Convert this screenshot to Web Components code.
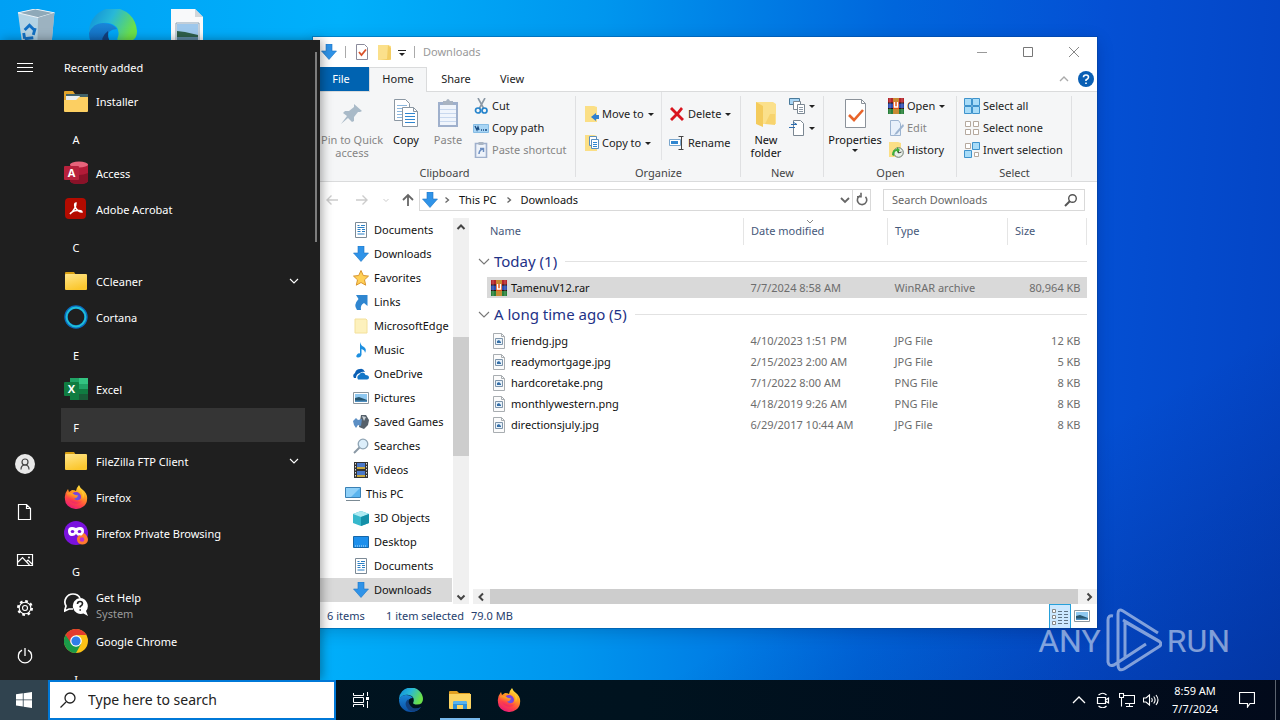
<!DOCTYPE html>
<html lang="en">
<head>
<meta charset="utf-8">
<title>Desktop</title>
<style>
  html, body { margin: 0; height: 100%; overflow: hidden; }
  body { font: 11px/16px "Noto Sans", "Open Sans", sans-serif; color: #111; }
</style>
</head>
<body>
<desk-top></desk-top>

<script>
/* ---------- icon library ---------- */
const FOLDER = `<path d="M1 4q0-1 1-1h8l2 3H1z" fill="#d9a012"/><path d="M1 6q0-1 1-1h20q1 0 1 1v14q0 1-1 1H2q-1 0-1-1z" fill="url(#f)"/><defs><linearGradient id="f" x2=".4" y2="1"><stop stop-color="#ffe58a"/><stop offset="1" stop-color="#fbc72e"/></linearGradient></defs>`;
const ARROW = `<path d="M5 0h6v7h4.5L8 15.500.5 7H5z" fill="#2f93e8" stroke="#1b74c5" stroke-width=".6"/>`;
const RAR = `<path d="M0 0h16v5H0z" fill="#b5252b"/><path d="M0 5h16v5H0z" fill="#2d4cb0"/><path d="M0 10h16v6H0z" fill="#28803a"/><path d="M0 5h16M0 10.500h16" stroke="#24130f"/><path d="M5 0h6v16H5z" fill="#c98b34"/><path d="M5 4h6v7H5z" fill="#e4571c"/><path d="M6.500 4v5h3V4" fill="none" stroke="#fff" stroke-width="1.500"/><path d="M2 0v16M14 0v16" stroke="#ffffff" stroke-opacity=".25"/>`;
const DOCTEXT = `<path d="M2.500.5h11v15h-11z" fill="#fff" stroke="#7c8a96"/><path d="M4.500 3.500h2M8 3.500h4M4.500 5.500h7M4.500 7.500h3M9 7.500h3M4.500 9.500h3M9 9.500h3M4.500 12h7" stroke="#2a7fc4"/>`;
const JPG = `<path d="M2.500.5h8l3 3v12h-11z" fill="#fbfbfb" stroke="#a8adb1"/><path d="M10.500.5v3h3" fill="none" stroke="#a8adb1"/><path d="M4.500 5.500h7v6h-7z" fill="#e8f2fa" stroke="#7d94aa"/><path d="M6 10V8l2-1 2 2v1z" fill="#356fa8"/>`;
const PIC = `<path d="M.5 2.500h15v11H.5z" fill="#fff" stroke="#8d979f"/><path d="M2 4h12v8H2z" fill="#8fc8f0"/><path d="M2 8l4-1 8 3v2H2z" fill="#27556e"/><path d="M2 10.500h12V12H2z" fill="#4f8fc0"/>`;
const FOX = `<defs><linearGradient id="g" x1=".8" y1="0" x2=".3" y2="1"><stop stop-color="#fff34a"/><stop offset=".35" stop-color="#ffa51f"/><stop offset=".7" stop-color="#ff4743"/><stop offset="1" stop-color="#e8177c"/></linearGradient><radialGradient id="h"><stop stop-color="#4e6bf0"/><stop offset="1" stop-color="#8a35d6"/></radialGradient></defs><path d="M15 0q1 3 4 5 5 4 4 10a11 9.500 0 0 1-22-1Q0 9 4 4l1 3 3-2q3 0 4 1 1-4 3-6z" fill="url(#g)"/><circle cx="12" cy="12" r="5" fill="url(#h)"/><path d="M3 8q5-1 8 2l3 .5q-1 3-4 3 2 3 6 1 4-3 2-8 4 5 0 10-4 4-10 1-5-3-5-9.500z" fill="url(#g)"/>`;
const EDGE = `<defs><linearGradient id="e1" x2="1" y2=".4"><stop stop-color="#0c8ad8"/><stop offset=".5" stop-color="#28b8d8"/><stop offset="1" stop-color="#6ae04a"/></linearGradient><linearGradient id="e2" x2="0" y2="1"><stop stop-color="#1a86d8"/><stop offset="1" stop-color="#0b4fa3"/></linearGradient></defs><path d="M0 12A12 12 0 0 1 24 11q0 5.500-6 5.500-5 0-3.500-2.500Q16 8.500 10 7 3 6 0 12z" fill="url(#e1)"/><path d="M0 12q2-5 7-5 5 0 7 3-5 0-5 5 0 6 6 7 4 0 7-3-3 5-10 5A12 12 0 0 1 0 12z" fill="url(#e2)"/><path d="M9.500 11q-4 3-2.500 7 2 5 7 5.500 5-.5 8-4.500-4 2-8 1-5-3-4.500-9z" fill="#12407e"/>`;
const chev = (d, c, w = 1.2) => `<path d="${d}" fill="none" stroke="${c}" stroke-width="${w}"/>`;
const line = (d, c = '#fff', w = 1) => `<path d="${d}" fill="none" stroke="${c}" stroke-width="${w}"/>`;

const ICONS = {
  /* start menu */
  menu: [24, line('M4 7.500h16M4 11.500h16M4 15.500h16')],
  user: [24, `<circle cx="12" cy="12" r="10" fill="#e8e8e8"/><circle cx="12" cy="10" r="3" fill="none" stroke="#444" stroke-width="1.200"/><path d="M8 17.500q0-4.500 4-4.500t4 4.500" fill="none" stroke="#444" stroke-width="1.200"/>`],
  doc: [24, line('M5.500 4.500h8l4 4v11h-12zM13.500 4.500v4h4', '#fff', 1.2)],
  picture: [24, line('M4.500 6.500h15v11h-15zM5 14l4.500-4.500 7 7.500M13 14l2-2 4 4', '#fff', 1.2) + '<circle cx="16" cy="9.500" r="1" fill="#fff"/>'],
  gear: [24, `<circle cx="12" cy="12" r="6.800" fill="none" stroke="#fff" stroke-width="2.400" stroke-dasharray="2.670 2.670"/><circle cx="12" cy="12" r="5.800" fill="#1f1f1f" stroke="#fff" stroke-width="1.100"/><circle cx="12" cy="12" r="2.500" fill="none" stroke="#fff" stroke-width="1.100"/>`],
  power: [24, line('M9 6.200a6.700 6.700 0 1 0 6 0M12 4v8', '#fff', 1.3)],
  down: [12, chev('M2 4l4 4 4-4', '#fff', 1.1)],
  folder: [24, FOLDER],
  installer: [24, `<path d="M0 3q0-1 1-1h8l2 3h13v6H0z" fill="#e0a32b"/><path d="M2 5h22v5H2z" fill="#41626a"/><path d="M2 7h14l-2 4H2z" fill="#e8eef0"/><path d="M0 11h12l3-3h9v14q0 1-1 1H1q-1 0-1-1z" fill="#fccf62"/>`],
  access: [24, `<path d="M6 3v17q1 3 9 3t9-3V3z" fill="#b31b38"/><path d="M6 12q9 4 18 0v8q-1 3-9 3t-9-3z" fill="#8a1228"/><ellipse cx="15" cy="3.500" rx="9" ry="3" fill="#e8637b"/><rect y="5" width="15" height="14" rx="1" fill="#b8213c"/><text x="7.500" y="16" font-family="Open Sans" font-weight="700" font-size="11" fill="#fff" text-anchor="middle">A</text>`],
  acrobat: [24, `<rect x="1" y="1" width="21" height="21" rx="4" fill="#b30b00"/><path d="M6 17q6-5 6-11-2 0-1 4 3 5 7 5 0-2-5-1.500T6 17z" fill="none" stroke="#fff" stroke-width="1.500"/>`],
  cortana: [24, `<circle cx="12" cy="12" r="10" fill="none" stroke="#0a6cc0" stroke-width="3.400"/><circle cx="12" cy="12" r="9.500" fill="none" stroke="#1fc0d8" stroke-width="1.800"/>`],
  excel: [24, `<path d="M6 1h18v22H6z" fill="#21a366"/><path d="M15 1h9v6h-9z" fill="#33c481"/><path d="M6 12h9v11H6z" fill="#107c41"/><path d="M15 12h9v11h-9z" fill="#185c37"/><path d="M15 12h9v5h-9z" fill="#107c41"/><rect y="5" width="15" height="14" rx="1" fill="#107c41"/><text x="7.500" y="16" font-family="Open Sans" font-weight="700" font-size="11" fill="#fff" text-anchor="middle">X</text>`],
  firefox: [24, FOX],
  private: [24, `<circle cx="12" cy="12" r="12" fill="#7a12dd"/><path d="M4 10q0-4 4-4 2 0 4 1 2-1 4-1 4 0 4 4 0 5-4 5-3 0-4-2-1 2-4 2-4 0-4-5z" fill="#fff"/><ellipse cx="8.500" cy="10.500" rx="1.800" ry="1.500" fill="#7a12dd"/><ellipse cx="15.500" cy="10.500" rx="1.800" ry="1.500" fill="#7a12dd"/><path d="M13 18q0-3 3-4l1 1 3-3q4 3 4 7a5.500 5 0 0 1-11-1z" fill="#ff7a2f"/><circle cx="18" cy="18.500" r="2.300" fill="#c02fd0"/>`],
  help2: [24, `<path d="M9 1a8 8 0 0 0-7 12l-1.500 5 4.500-2h4" fill="none" stroke="#fff" stroke-width="1.700"/><path d="M9 1q5 0 7 4" fill="none" stroke="#fff" stroke-width="1.700"/><path d="M16 5a8 8 0 1 0 3.500 15.500L24 23l-2-5a8 8 0 0 0-6-13z" fill="#fff"/><path d="M13.500 11q0-2.500 2.500-2.500t2.500 2.200q0 1.500-2.300 2.800v1M16.200 16.200v1.600" stroke="#1f1f1f" stroke-width="1.600" fill="none"/>`],
  chrome: [24, `<circle cx="12" cy="12" r="12" fill="#fbc116"/><path d="M12 12L1.600 6A12 12 0 0 0 12 24l5-9z" fill="#1a9a48"/><path d="M1.600 6A12 12 0 0 1 22.400 6H12v6L7 14z" fill="#e33b2e"/><circle cx="12" cy="12" r="5.800" fill="#fff"/><circle cx="12" cy="12" r="4.600" fill="#2f7de9"/>`],
  /* taskbar */
  windows: [16, `<path d="M0 2.300l6.800-1v6.200H0zM7.600 1.200L16 0v7.500H7.600zM0 8.300h6.800v6.300L0 13.600zM7.600 8.300H16V16l-8.400-1.200z" fill="#fff"/>`],
  search: [16, line('M.5 15.500l5.500-5.500', '#222', 1.3) + '<circle cx="10" cy="6" r="5" fill="none" stroke="#222" stroke-width="1.300"/>'],
  taskview: [16, line('M.5 1v2.500h10V1M.5 15v-2.500h10V15M.5 5.500h10v5H.5zM14.500 0v4M14.500 9v7') + '<path d="M13 5h3v3h-3z" fill="#fff"/>'],
  edge: [24, EDGE],
  explorer: [24, `<path d="M1 4q0-1 1-1h7l2 2h11v5H1z" fill="#e2a021"/><path d="M1 6h22v14q0 1-1 1H2q-1 0-1-1z" fill="#fcd462"/><path d="M5 21v-6q0-2 2-2h10q2 0 2 2v6h-4v-4H9v4z" fill="#2f8fd8"/><path d="M5 15q0-2 2-2h10q2 0 2 2v1H5z" fill="#59b2ee"/>`],
  up: [16, chev('M2 11l6-6 6 6', '#fff', 1.3)],
  meet: [16, line('M2.500 5.500h8v6h-8zM10.500 8l3-2v5l-3-2M3.500 3q4.500-3.500 8 0M3.500 14q4.500 3.500 8 0', '#fff', 1.2)],
  net: [16, line('M4 3.500h11.500v8H6M10.500 11.500v3M7 14.500h7M.5 1.500h4v4h-4zM2.500 5.500v9', '#fff', 1.1)],
  sound: [16, line('M.5 6h2.500l3.500-3v10L3 10H.500zM8.500 6q1.500 2 0 4M10.700 4.500q2.800 3.500 0 7M13 3q4 5 0 10', '#fff', 1.1)],
  note: [16, line('M.500.500h15v11h-4.500L8.500 15V11.500h-8z', '#fff', 1.2)],
  /* desktop */
  bin: [48, `<path d="M1 4l18-4 20 4-4 44H7z" fill="#c8d8e2" fill-opacity=".9"/><path d="M1 4l18-4 20 4-17 5z" fill="#8fa9b8" stroke="#eef5f9"/><path d="M22 9l17-5-4 44H21z" fill="#9cb2c0"/><path d="M8 22l5-5 5 5M19 20l-2 7M17 30l-9 1M8 31l-1-6" stroke="#1270c4" stroke-width="3" fill="none"/>`],
  photo: [48, `<path d="M8 0h24l8 8v40H8z" fill="#f8f9fa"/><path d="M32 0v8h8z" fill="#d0d6da"/><path d="M13 14h23v20H13z" fill="#fff" stroke="#8aa0b4"/><path d="M14 15h21v15H14z" fill="#9ec8ec"/><path d="M14 22l8 1 13 3v5H14z" fill="#2f5f4a"/><path d="M14 28h21v5H14z" fill="#5c86a0"/>`],
  /* explorer */
  arrow: [16, ARROW],
  checkdoc: [16, `<path d="M2.500.500h8l3 3v12h-11z" fill="#fff" stroke="#8b8b9b"/><path d="M5 8l2.500 3L12 5.500" stroke="#d8512a" stroke-width="1.800" fill="none"/>`],
  pale: [16, `<path d="M1 1h10l3 1v14H1z" fill="#fbe08b"/><path d="M11 1l3 3v11l-2 1H3l7-1z" fill="#f3cd62"/>`],
  faint: [16, `<path d="M2 1h11l1 1v13H2z" fill="#fdf1bd" stroke="#f3e09a"/>`],
  qat: [8, `<path d="M0 1.500h8" stroke="#222"/><path d="M1 4h6L4 7z" fill="#222"/>`],
  min: [12, line('M1 6.500h10', '#999')],
  max: [12, line('M1.500 1.500h9v9h-9z', '#777')],
  close: [12, line('M1 1l10 10M11 1L1 11', '#888')],
  collapse: [12, chev('M2 8l4-4 4 4', '#aaa', 1.4)],
  help: [16, `<circle cx="8" cy="8" r="8" fill="#0a5fb4"/><path d="M5.500 6.200Q5.500 4 8 4t2.500 2.200Q10.500 7.500 8 9v1M8 11.500v1.500" stroke="#fff" stroke-width="1.600" fill="none"/>`],
  pin: [24, `<path d="M14 2l8 7-2 1-2 0-4 5 0 4-2 1-4-4-7 6 6-8-4-3 2-2 4 0 5-4z" fill="#a9bac8"/>`],
  copy: [32, `<path d="M4.500 1.500h11l4 4v17h-15z" fill="#fff" stroke="#8b97a2"/><path d="M7 7.500h10M7 10.500h10M7 13.500h10M7 16.500h10M7 19.500h8" stroke="#8ab6de"/><path d="M12.500 9.500h11l4 4v15h-15z" fill="#fff" stroke="#8b97a2"/><path d="M23.500 9.500v4h4" fill="none" stroke="#8b97a2"/><path d="M15 15.500h10M15 18.500h10M15 21.500h10M15 24.500h10" stroke="#2f86d0"/>`],
  paste: [32, `<path d="M6 4h20v25H6z" fill="#9fb0cc"/><path d="M8 7h16v20H8z" fill="#f0f5fc"/><path d="M8 11.500h16M8 15.500h16M8 19.500h16M8 23.500h16" stroke="#c8d8ee"/><path d="M11 3h3q2-4 4 0h3v4H11z" fill="#a9b4c2"/>`],
  cut: [16, `<path d="M5 0l6 11M12 0L6 11" stroke="#8b98a5" stroke-width="1.600"/><circle cx="5" cy="12.500" r="2.500" fill="none" stroke="#2684cc" stroke-width="1.700"/><circle cx="11.500" cy="12.500" r="2.500" fill="none" stroke="#2684cc" stroke-width="1.700"/>`],
  path: [16, `<path d="M.5 4.500h15v8H.5z" fill="#a8d5f5" stroke="#86bce4"/><path d="M2 6l2 4 1-3 1 3M8 10h1M10 10h1M12 10h2" stroke="#174a80" fill="none" stroke-width="1.300"/>`],
  shortcut: [16, `<path d="M2.500 1.500h11v14h-11z" fill="#eef3fa" stroke="#9fb0cc" stroke-width="1.600"/><path d="M5.500 0h5v3h-5z" fill="#a9b4c2"/><path d="M6 12q0-4 4-5M7 6.500h3.500V10" stroke="#6d8ec0" stroke-width="1.500" fill="none"/>`],
  moveto: [16, `<path d="M2 0h9l3 1v15H2z" fill="#fbdf86"/><path d="M16 9h-3V7l-5 4 5 4v-2h3z" fill="#2f7fd0"/>`],
  copyto: [16, `<path d="M2 0h9l3 1v15H2z" fill="#fbdf86"/><path d="M6.500 1.500h7v9h-7z" fill="#fff" stroke="#5a8fc0"/><path d="M8.500 4.500h7v9h-7z" fill="#fff" stroke="#5a8fc0"/><path d="M10 7.500h4M10 9.500h4M10 11.500h4" stroke="#2f86d0"/>`],
  del: [16, `<path d="M3 1l5 5 4-5 2 2-4 5 5 5-2 2-5-5-5 5-2-2 5-5-5-5z" fill="#d9141e"/>`],
  rename: [16, `<path d="M.5 4.500h11v6H.5z" fill="#fff" stroke="#7aa6cc"/><path d="M2 6h7v3H2z" fill="#2f86d0"/><path d="M9.500 1.500h5M9.500 14.500h5M12.500 2v12" stroke="#444" fill="none"/>`],
  newfolder: [32, `<path d="M6 4h17l3 2v20H8z" fill="#fbe08b"/><path d="M6 4l7 4v21l-7-3z" fill="#f4cb5c"/><path d="M20 16h5v11l-10-1z" fill="#f7d36e"/>`],
  newitem: [16, `<path d="M.5.5h10v6H.5z" fill="#a8d5f5" stroke="#4a7a9a"/><path d="M4.500 3.500h7v8h-7z" fill="#fff" stroke="#7b8792"/><path d="M8.500 6.500h7v9h-7z" fill="#fff" stroke="#7b8792"/><path d="M10 9.500h4M10 11.500h4M10 13.500h4" stroke="#8b98a5"/>`],
  easy: [16, `<path d="M4.500.500h7l3 3v12h-10z" fill="#fff" stroke="#7b8792"/><path d="M2 4.500h6M0 7.500h6M4 2l4 2.500" stroke="#2f6fb0" fill="none"/>`],
  props: [32, `<path d="M6.500 1.500h16l4 4v24h-20z" fill="#fff" stroke="#8b929a"/><path d="M22.500 1.500v4h4" fill="none" stroke="#8b929a"/><path d="M10 17l5 5 9-10" stroke="#e8642a" stroke-width="2.600" fill="none"/>`],
  rar: [16, RAR],
  edit: [16, `<path d="M2.500.500h8l2 3v12h-10z" fill="#e8f0fa" stroke="#9db4d0"/><path d="M15 4l-7 8-2 3 3-1 7-8z" fill="#9db4d0"/>`],
  history: [16, `<path d="M1 0h9l3 1v14H1z" fill="#fbdf86"/><circle cx="10.500" cy="10.500" r="4.800" fill="#e8efe8" stroke="#6a7a70"/><path d="M10.500 8v3l3-1" stroke="#444" fill="none"/><path d="M4 13q0-6 5-6V5l3 3-3 3V9q-3 0-3 5z" fill="#3fae3a"/>`],
  selall: [16, `<path d="M.5.5h7v7h-7zM8.500.5h7v7h-7zM.5 8.500h7v7h-7zM8.500 8.500h7v7h-7z" fill="#a8dcf8" stroke="#3f93cc"/>`],
  selnone: [16, `<path d="M1.500 1.500h5v5h-5zM9.500 1.500h5v5h-5zM1.500 9.500h5v5h-5zM9.500 9.500h5v5h-5z" fill="#fff" stroke="#b5a99e"/>`],
  selinv: [16, `<path d="M8.500.5h7v7h-7zM.5 8.500h7v7h-7z" fill="#a8dcf8" stroke="#3f93cc"/><path d="M1.500 1.500h5v5h-5zM10.500 10.500h4v4h-4z" fill="#fff" stroke="#b5a99e"/>`],
  back: [16, line('M14 8H3M7.500 3.500L3 8l4.500 4.500', '#ccc', 1.4)],
  forward: [16, line('M2 8h11M8.500 3.500L13 8l-4.500 4.500', '#ccc', 1.4)],
  recent: [8, chev('M1.500 3L4 5.500 6.500 3', '#ccc', 1)],
  upto: [16, line('M8 14V3M3 8l5-5 5 5', '#666', 1.8)],
  crumb: [8, chev('M2.500 1.500L5.500 4 2.500 6.500', '#666', 1.3)],
  drop: [12, chev('M2 4l4 4 4-4', '#666', 1.8)],
  refresh: [16, line('M11.500 4.700A4.700 4.700 0 1 1 6 3.700M7 .800V4.800H3', '#666', 1.6)],
  find: [16, line('M2 14l5-5', '#555', 2) + '<circle cx="9.500" cy="6.500" r="3.800" fill="none" stroke="#555" stroke-width="1.400"/>'],
  documents: [16, DOCTEXT],
  star: [16, `<path d="M8 .5l2.300 5 5.200.6-4 3.700 1.200 5.400L8 12.500l-4.700 2.700L4.500 9.800.5 6.100l5.200-.6z" fill="#ffd056" stroke="#d89530"/>`],
  links: [16, `<path d="M3 1h11.500v11L11 9q-4 2-3 7H4q-4-5 1.500-11z" fill="#2f86d0"/>`],
  music: [16, `<path d="M7 0q1 4 4 5 3 2 1 6 0-3-3.500-4v6q-1 3-4 2.500-2.500-1 0-3.500 1-1 2.500-.5z" fill="#1c8fe0"/>`],
  onedrive: [16, `<path d="M1 12q-2-3 1-5 1-4 5-4 3-1 5 3-3-1-5 1-4 1-4 5z" fill="#0a5fb4"/><path d="M5 13.500q-2-3 1.500-5Q8 5.500 11 7q1 .500 1.500 2 3.500 0 3.500 2.500 0 2-2 2z" fill="#1477c8"/>`],
  pictures: [16, PIC],
  games: [16, `<path d="M8 1h5l3 5-1 5-4 4-5-2z" fill="#56616b"/><path d="M9 2l4 1-2 4z" fill="#c8d0d6"/><path d="M0 7l3-3 2 2 4-1-1 7-3-1-2 3-2-3z" fill="#5c8fc4"/>`],
  searches: [16, line('M1 15l5.500-5.500', '#8a98a4', 2) + '<circle cx="10" cy="6" r="4.800" fill="#dceefa" stroke="#8fa4b4" stroke-width="1.300"/>'],
  videos: [16, `<path d="M1 0h14v16H1z" fill="#333"/><path d="M4 1h8v6H4z" fill="#4a78c8"/><path d="M4 5h8v2H4zM4 13h8v2H4z" fill="#c8a83a"/><path d="M4 9h8v4H4z" fill="#4a78c8"/><path d="M2.500 1v15M13.500 1v15" stroke="#ddd" stroke-dasharray="1.500 1.500"/>`],
  pc: [16, `<path d="M.5 1.500h15v10H.5z" fill="#5ab4ee" stroke="#3a80b4"/><path d="M1 2h14L6 11H1z" fill="#8fd0f8"/><path d="M1 14.500h14" stroke="#7b8a94"/>`],
  cube: [16, `<path d="M0 4l8-3 8 3v9l-8 3-8-3z" fill="#36b8cc"/><path d="M0 4l8-3 8 3-8 3z" fill="#aeeaf2"/><path d="M8 7l8-3v9l-8 3z" fill="#1490a8"/>`],
  desktop: [16, `<path d="M.5 2.500h15v11H.5z" fill="#1c8fec" stroke="#1566a8"/><path d="M2 12h12" stroke="#b8e0fa" stroke-dasharray="1 1"/>`],
  jpg: [16, JPG],
  group: [12, chev('M1 4l5 5 5-5', '#777', 1.1)],
  sort: [8, chev('M1 2l3 3 3-3', '#888', 1)],
  sup: [12, chev('M2.500 8L6 4.500 9.500 8', '#444', 2)],
  sdown: [12, chev('M2.500 4.500L6 8l3.500-3.500', '#444', 2)],
  sleft: [12, chev('M8 2.500L4.500 6 8 9.500', '#444', 2)],
  sright: [12, chev('M4.500 2.500L8 6 4.500 9.500', '#444', 2)],
  details: [16, `<path d="M.5.5h3v3h-3zM.5 6.500h3v3h-3zM.5 12.500h3v3h-3z" fill="#fff" stroke="#888"/><path d="M6 2.500h4M12 2.500h4M6 5.500h4M12 5.500h4M6 8.500h4M12 8.500h4M6 11.500h4M12 11.500h4M6 14.500h4M12 14.500h4" stroke="#5f7384"/>`],
  caret: [8, `<path d="M1 3h6L4 6z" fill="#222"/>`]
};

/* Registers an element whose shadow root is cloned from a template;
   `html` may be a function of the element, for those with attributes. */
function define(tag, css, html) {
  customElements.define(tag, class extends HTMLElement {
    connectedCallback() {
      if (this.shadowRoot) return;
      const t = document.createElement('template');
      t.innerHTML = `<style>*{box-sizing:border-box}button{font:inherit;color:inherit;background:none;border:0;padding:0;margin:0}${css}</style>` +
        (typeof html === 'function' ? html(this) : html);
      this.attachShadow({ mode: 'open' }).append(t.content.cloneNode(true));
    }
  });
}

define('ui-icon', `:host{display:block;flex:none;line-height:0}svg{display:block}`, el => {
  const [box, body] = ICONS[el.getAttribute('name')];
  const s = el.getAttribute('size') || box;
  return `<svg width="${s}" height="${s}" viewBox="0 0 ${box} ${box}" aria-hidden="true">${body}</svg>`;
});

/* ---------- start menu ---------- */
define('start-item', `
  :host{display:block;height:36px}
  button{display:flex;align-items:center;gap:8px;width:100%;height:100%;padding:0 5px 0 3px;text-align:left;color:#fff}
  .t{flex:1;line-height:16px;padding-top:2px} small{display:block;font-size:11px;color:#9a9a9a}`,
  el => `<button><ui-icon name="${el.getAttribute('icon')}" size="24"></ui-icon><span class="t"><slot></slot>${el.hasAttribute('sub') ? `<small>${el.getAttribute('sub')}</small>` : ''}</span>${el.hasAttribute('more') ? '<ui-icon name="down"></ui-icon>' : ''}</button>`);

define('start-letter', `
  :host{display:block;height:36px;padding:1px 0}
  button{display:block;width:100%;height:34px;padding:5px 0 0 3px;text-align:left;color:#fff}
  :host([hot]) button{background:#353535}
  span{display:block;width:24px;text-align:center}`, `<button><span><slot></slot></span></button>`);

define('start-menu', `
  :host{display:flex;background:#1f1f1f;color:#fff;overflow:hidden}
  nav{display:flex;flex-direction:column;width:50px;flex:none;padding-top:4px}
  nav button{display:flex;align-items:center;justify-content:center;height:48px}
  nav button:first-child{margin-bottom:auto}
  .list{flex:1;min-width:0;overflow:hidden;padding:7px 10px 0 11px}
  h2{font:inherit;margin:0;height:36px;padding:13px 0 0 3px}
  .bar{width:5px;flex:none;padding-top:12px}
  .bar i{display:block;width:2px;height:190px;background:#7d7d7d}`, `
  <nav aria-label="Start">
    <button aria-label="Expand"><ui-icon name="menu"></ui-icon></button>
    <button aria-label="User"><ui-icon name="user"></ui-icon></button>
    <button aria-label="Documents"><ui-icon name="doc"></ui-icon></button>
    <button aria-label="Pictures"><ui-icon name="picture"></ui-icon></button>
    <button aria-label="Settings"><ui-icon name="gear"></ui-icon></button>
    <button aria-label="Power"><ui-icon name="power"></ui-icon></button>
  </nav>
  <div class="list">
    <h2>Recently added</h2>
    <start-item icon="installer">Installer</start-item>
    <start-letter>A</start-letter>
    <start-item icon="access">Access</start-item>
    <start-item icon="acrobat">Adobe Acrobat</start-item>
    <start-letter>C</start-letter>
    <start-item icon="folder" more>CCleaner</start-item>
    <start-item icon="cortana">Cortana</start-item>
    <start-letter>E</start-letter>
    <start-item icon="excel">Excel</start-item>
    <start-letter hot>F</start-letter>
    <start-item icon="folder" more>FileZilla FTP Client</start-item>
    <start-item icon="firefox">Firefox</start-item>
    <start-item icon="private">Firefox Private Browsing</start-item>
    <start-letter>G</start-letter>
    <start-item icon="help2" sub="System">Get Help</start-item>
    <start-item icon="chrome">Google Chrome</start-item>
    <start-letter>I</start-letter>
  </div>
  <div class="bar"><i></i></div>`);

/* ---------- taskbar ---------- */
define('task-button', `
  :host{display:block;width:48px}
  :host([tray]){width:24px}
  button{display:flex;width:100%;height:100%;align-items:center;justify-content:center}
  :host([active]) button{background:linear-gradient(#76b9ed,#76b9ed) center bottom/40px 2px no-repeat}
  :host([pressed]) button{background:#30434f}`,
  el => `<button aria-label="${el.getAttribute('label')}"><ui-icon name="${el.getAttribute('icon')}" size="${el.getAttribute('size')}"></ui-icon></button>`);

define('task-bar', `
  :host{display:flex;background:linear-gradient(90deg,#001420,#00131f 50%,#020a1b);color:#fff}
  label{display:flex;align-items:center;gap:12px;width:288px;padding:0 10px;background:#fff;border:2px solid #0078d7}
  input{font:14px/20px "Noto Sans",sans-serif;border:0;outline:0;padding:0;flex:1;min-width:0;background:none}
  input::placeholder{color:#222;opacity:1}
  .apps{display:flex;gap:1px}
  .apps task-button:first-child{width:50px}
  .tray{display:flex;margin-left:auto}
  time{width:64px;text-align:center;line-height:18px;padding-top:2px}
  .note{width:40px;margin-right:8px}
  .peek{width:5px;border-left:1px solid #5c6470}`, `
  <task-button icon="windows" size="16" label="Start" pressed></task-button>
  <label><ui-icon name="search" size="16"></ui-icon><input type="text" placeholder="Type here to search" aria-label="Type here to search"></label>
  <div class="apps">
    <task-button icon="taskview" size="16" label="Task View"></task-button>
    <task-button icon="edge" size="24" label="Edge"></task-button>
    <task-button icon="explorer" size="24" label="File Explorer" active></task-button>
    <task-button icon="firefox" size="24" label="Firefox"></task-button>
  </div>
  <div class="tray">
    <task-button tray icon="up" size="16" label="Hidden icons"></task-button>
    <task-button tray icon="meet" size="16" label="Meet Now"></task-button>
    <task-button tray icon="net" size="16" label="Network"></task-button>
    <task-button tray icon="sound" size="16" label="Volume"></task-button>
    <time>8:59 AM<br>7/7/2024</time>
    <task-button class="note" icon="note" size="16" label="Notifications"></task-button>
    <button class="peek" aria-label="Show desktop"></button>
  </div>`);

/* ---------- explorer ribbon ---------- */
define('ribbon-group', `
  :host{display:flex;flex-direction:column;flex:none;position:relative}
  :host::after{content:"";position:absolute;right:0;top:4px;bottom:4px;width:1px;background:#dfe0e2}
  .body{display:flex;flex:1;padding-left:var(--inset,0)} .label{text-align:center;color:#444;height:16px}`,
  el => `<div class="body"><slot></slot></div><div class="label">${el.getAttribute('label')}</div>`);

define('ribbon-big', `
  :host{display:block;flex:none}
  button{display:flex;flex-direction:column;align-items:center;width:100%;padding-top:6px;line-height:13px;white-space:nowrap}
  ui-icon{margin-bottom:3px} .pin{padding:4px}
  :host([off]) button{color:#858585}`,
  el => `<button><ui-icon ${el.getAttribute('icon') === 'pin' ? 'class="pin"' : ''} name="${el.getAttribute('icon')}"></ui-icon><span><slot></slot></span>${el.hasAttribute('menu') ? '<ui-icon name="caret"></ui-icon>' : ''}</button>`);

define('ribbon-small', `
  :host{display:block;height:22px}
  button{display:flex;align-items:center;gap:3px;height:100%;white-space:nowrap;color:#222}
  :host([off]) button{color:#858585}`,
  el => `<button aria-label="${el.textContent || el.getAttribute('label')}"><ui-icon name="${el.getAttribute('icon')}" size="16"></ui-icon><slot></slot>${el.hasAttribute('menu') ? '<ui-icon name="caret"></ui-icon>' : ''}</button>`);

define('explorer-ribbon', `
  :host{display:flex;height:91px;background:#f5f6f7;border-top:1px solid #dadbdc;border-bottom:1px solid #dadbdc;overflow:hidden}
  .col{padding-top:3px} .wide{padding-top:7px} .wide ribbon-small{height:29px}
  .clip{width:263px;--inset:4px} .org{width:165px;--inset:7px} .new{width:83px;--inset:2px} .open{width:133px;--inset:1px} .sel{width:115px;--inset:7px}
  .b70{width:70px} .b38{width:38px} .b46{width:46px} .b60{width:60px;margin-right:3px} .clip .col{padding-left:2px}
  .first{width:79px;margin-right:7px;height:68px;border-right:1px solid #e2e3e5}`, `
  <ribbon-group class="clip" label="Clipboard">
    <ribbon-big class="b70" icon="pin" off>Pin to Quick<br>access</ribbon-big>
    <ribbon-big class="b38" icon="copy">Copy</ribbon-big>
    <ribbon-big class="b46" icon="paste" off>Paste</ribbon-big>
    <div class="col"><ribbon-small icon="cut">Cut</ribbon-small><ribbon-small icon="path">Copy path</ribbon-small><ribbon-small icon="shortcut" off>Paste shortcut</ribbon-small></div>
  </ribbon-group>
  <ribbon-group class="org" label="Organize">
    <div class="wide first"><ribbon-small icon="moveto" menu>Move to</ribbon-small><ribbon-small icon="copyto" menu>Copy to</ribbon-small></div>
    <div class="wide"><ribbon-small icon="del" menu>Delete</ribbon-small><ribbon-small icon="rename">Rename</ribbon-small></div>
  </ribbon-group>
  <ribbon-group class="new" label="New">
    <ribbon-big class="b46" icon="newfolder">New<br>folder</ribbon-big>
    <div class="col"><ribbon-small icon="newitem" label="New item" menu></ribbon-small><ribbon-small icon="easy" label="Easy access" menu></ribbon-small></div>
  </ribbon-group>
  <ribbon-group class="open" label="Open">
    <ribbon-big class="b60" icon="props" menu>Properties</ribbon-big>
    <div class="col"><ribbon-small icon="rar" menu>Open</ribbon-small><ribbon-small icon="edit" off>Edit</ribbon-small><ribbon-small icon="history">History</ribbon-small></div>
  </ribbon-group>
  <ribbon-group class="sel" label="Select">
    <div class="col"><ribbon-small icon="selall">Select all</ribbon-small><ribbon-small icon="selnone">Select none</ribbon-small><ribbon-small icon="selinv">Invert selection</ribbon-small></div>
  </ribbon-group>`);

/* ---------- explorer panes ---------- */
define('address-row', `
  :host{display:flex;align-items:center;height:36px;padding:0 12px 0 2px}
  .nav{display:flex} .nav button{display:flex;justify-content:center;align-items:center;width:22px}
  .nav .l{width:34px} .nav .m{width:26px}
  .path{display:flex;align-items:center;flex:1;height:22px;border:1px solid #d9d9d9;padding-left:2px}
  .path a{color:#111;text-decoration:none} .path ui-icon[name=crumb]{margin:0 8px 0 5px}
  .path a+ui-icon[name=crumb]{margin:0 8px}
  .drop{margin-left:auto;margin-right:1px} .re{height:20px;border-left:1px solid #d9d9d9;padding:0 0 0 1px}
  label{display:flex;align-items:center;width:202px;height:22px;margin-left:12px;border:1px solid #d9d9d9;padding:0 5px 0 8px}
  input{font:inherit;border:0;outline:0;padding:0;flex:1;min-width:0} input::placeholder{color:#666;opacity:1}`, `
  <div class="nav">
    <button class="l" aria-label="Back"><ui-icon name="back"></ui-icon></button>
    <button class="m" aria-label="Forward"><ui-icon name="forward"></ui-icon></button>
    <button aria-label="Recent"><ui-icon name="recent"></ui-icon></button>
    <button aria-label="Up"><ui-icon name="upto"></ui-icon></button>
  </div>
  <div class="path"><ui-icon name="arrow"></ui-icon><ui-icon name="crumb"></ui-icon><a href="#pc">This PC</a><ui-icon name="crumb"></ui-icon><a href="#downloads">Downloads</a>
    <button class="drop" aria-label="Previous locations"><ui-icon name="drop"></ui-icon></button>
    <button class="re" aria-label="Refresh"><ui-icon name="refresh"></ui-icon></button></div>
  <label><input type="text" placeholder="Search Downloads" aria-label="Search Downloads"><ui-icon name="find"></ui-icon></label>`);

define('nav-item', `
  :host{display:block}
  a{display:flex;align-items:center;gap:5px;height:24px;padding-left:40px;color:#111;text-decoration:none;white-space:nowrap;overflow:hidden}
  :host([root]) a{padding-left:32px}
  :host([selected]) a{background:#d9d9d9}`,
  el => `<a href="#"><ui-icon name="${el.getAttribute('icon')}" size="16"></ui-icon><slot></slot></a>`);

define('nav-pane', `
  :host{display:flex;width:156px;flex:none}
  nav{flex:1;min-width:0;overflow:hidden;padding-right:1px}
  .bar{display:flex;flex-direction:column;align-items:center;width:16px;background:#f0f0f0;padding:3px 0 1px}
  .bar i{width:16px;height:119px;background:#cdcdcd;margin:104px 0 auto}`, `
  <nav aria-label="Folders">
    <nav-item icon="documents">Documents</nav-item><nav-item icon="arrow">Downloads</nav-item><nav-item icon="star">Favorites</nav-item>
    <nav-item icon="links">Links</nav-item><nav-item icon="faint">MicrosoftEdge</nav-item><nav-item icon="music">Music</nav-item>
    <nav-item icon="onedrive">OneDrive</nav-item><nav-item icon="pictures">Pictures</nav-item><nav-item icon="games">Saved Games</nav-item>
    <nav-item icon="searches">Searches</nav-item><nav-item icon="videos">Videos</nav-item><nav-item icon="pc" root>This PC</nav-item>
    <nav-item icon="cube">3D Objects</nav-item><nav-item icon="desktop">Desktop</nav-item><nav-item icon="documents">Documents</nav-item>
    <nav-item icon="arrow" selected>Downloads</nav-item>
  </nav>
  <div class="bar"><ui-icon name="sup"></ui-icon><i></i><ui-icon name="sdown"></ui-icon></div>`);

const FILES = [
  ['Today (1)', [['rar', 'TamenuV12.rar', '7/7/2024 8:58 AM', 'WinRAR archive', '80,964 KB']]],
  ['A long time ago (5)', [
    ['jpg', 'friendg.jpg', '4/10/2023 1:51 PM', 'JPG File', '12 KB'],
    ['jpg', 'readymortgage.jpg', '2/15/2023 2:00 AM', 'JPG File', '5 KB'],
    ['jpg', 'hardcoretake.png', '7/1/2022 8:00 AM', 'PNG File', '8 KB'],
    ['jpg', 'monthlywestern.png', '4/18/2019 9:26 AM', 'PNG File', '8 KB'],
    ['jpg', 'directionsjuly.jpg', '6/29/2017 10:44 AM', 'JPG File', '8 KB']]]
];
define('file-list', `
  :host{display:flex;flex-direction:column;flex:1;min-width:0;padding-left:4px}
  .pane{flex:1;min-height:0;overflow:hidden;padding:0 10px 0 14px}
  table{border-collapse:collapse;table-layout:fixed;width:100%}
  th{font-weight:400;text-align:left;padding:0} td{padding:0}
  thead th{height:27px;color:#46587a;position:relative;padding:0 0 2px 7px;border-right:1px solid #e5e5e5}
  thead th:first-child{padding-left:3px}
  .sort{position:absolute;top:0;left:calc(50% - 10px)}
  .d{width:144px} .t{width:120px} .s{width:79px}
  .g div{display:flex;align-items:center;height:32px;margin-left:-9px;font-size:15px;line-height:20px;color:#1e3287;gap:4px}
  .g div::after{content:"";flex:1;height:1px;background:#e2e2e2;margin-left:4px}
  .f td{height:21px;color:#6d6d6d;padding-left:7px} .f td:first-child{color:#111;padding-left:4px}
  .f td:last-child{text-align:right;padding-right:6px}
  .f span{display:flex;align-items:center;gap:4px}
  .sel td{background:#d9d9d9}
  .bar{display:flex;align-items:center;height:15px;background:#f0f0f0;padding:0 2px}
  .bar i{flex:1;height:15px;background:#cdcdcd;margin:0 5px 0 3px}`,
  () => `<div class="pane"><table>
    <thead><tr><th>Name</th><th class="d">Date modified<ui-icon class="sort" name="sort"></ui-icon></th><th class="t">Type</th><th class="s">Size</th></tr></thead>
    ${FILES.map(([g, rows], i) => `<tbody><tr class="g"><th colspan="4"><div><ui-icon name="group"></ui-icon>${g}</div></th></tr>${rows.map(r =>
      `<tr class="f${i ? '' : ' sel'}"><td><span><ui-icon name="${r[0]}"></ui-icon>${r[1]}</span></td><td>${r[2]}</td><td>${r[3]}</td><td>${r[4]}</td></tr>`).join('')}</tbody>`).join('')}
  </table></div>
  <div class="bar"><ui-icon name="sleft"></ui-icon><i></i><ui-icon name="sright"></ui-icon></div>`);

define('explorer-window', `
  :host{display:flex;flex-direction:column;background:#fff;box-shadow:0 0 0 1px rgba(0,60,130,.35),0 4px 16px rgba(0,0,40,.2)}
  header{display:flex;align-items:center;height:30px;padding-left:8px;color:#999}
  header .gap{width:1px;height:12px;background:#aaa;margin:0 8px}
  header .doc{margin-right:7px} header .qat{margin:2px 0 0 5px}
  .ctl{display:flex;margin-left:auto} .ctl button{display:flex;width:46px;height:29px;align-items:center;justify-content:center}
  .tabs{display:flex;align-items:flex-end;height:24px;padding-right:3px}
  .tabs button{height:24px;width:58px;color:#222;text-align:center}
  .tabs .file{width:56px;background:#0063b1;color:#fff}
  .tabs .on{height:25px;margin-bottom:-1px;padding-bottom:2px;position:relative;background:#f5f6f7;border:1px solid #dadbdc;border-bottom:0}
  .tabs .view{width:54px}
  .tabs .c{display:flex;width:28px;align-items:center;justify-content:center;margin-left:auto}
  .tabs .h{display:flex;width:16px;align-items:center}
  main{display:flex;flex:1;min-height:0}
  footer{display:flex;align-items:center;height:24px;padding:0 7px 0 14px;color:#26406e}
  footer .n{width:59px} footer .s{width:85px;white-space:nowrap}
  footer .v{display:flex;align-items:center;justify-content:center;width:22px;height:24px;margin-left:auto;background:#cce8ff;border:1px solid #26a0da;border-bottom:0}
  footer .w{margin-left:3px}`, `
  <header><ui-icon name="arrow"></ui-icon><span class="gap"></span><ui-icon class="doc" name="checkdoc"></ui-icon><ui-icon name="pale"></ui-icon><ui-icon class="qat" name="qat"></ui-icon><span class="gap"></span>Downloads
    <div class="ctl"><button aria-label="Minimize"><ui-icon name="min"></ui-icon></button><button aria-label="Maximize"><ui-icon name="max"></ui-icon></button><button aria-label="Close"><ui-icon name="close"></ui-icon></button></div></header>
  <div class="tabs"><button class="file">File</button><button class="on">Home</button><button>Share</button><button class="view">View</button>
    <button class="c" aria-label="Collapse ribbon"><ui-icon name="collapse"></ui-icon></button><button class="h" aria-label="Help"><ui-icon name="help"></ui-icon></button></div>
  <explorer-ribbon></explorer-ribbon>
  <address-row></address-row>
  <main><nav-pane></nav-pane><file-list></file-list></main>
  <footer><span class="n">6 items</span><span class="s">1 item selected</span><span>79.0 MB</span>
    <button class="v" aria-label="Details"><ui-icon name="details"></ui-icon></button><button class="w" aria-label="Large icons"><ui-icon name="pictures"></ui-icon></button></footer>`);

/* ---------- watermark ---------- */
define('water-mark', `
  :host{display:flex;align-items:center;gap:5px;color:#fff;opacity:.5;font:32px/60px "Roboto",sans-serif;pointer-events:none}
  svg{flex:none}`, `
  <span>ANY</span>
  <svg width="56" height="66" viewBox="0 0 56 66" fill="none" stroke="#fff" stroke-width="3" stroke-linejoin="round"><path d="M7 8Q2 7 2 12v42q1 5 6 3l32-21M12 50V6q0-6 5-3l35 22M19 50V14l35 20M12 50v6q0 8 6 5l36-23q2-3-1-5L17 12"/></svg>
  <span>RUN</span>`);

/* ---------- desktop ---------- */
define('desk-top', `
  :host{display:grid;grid-template-rows:1fr 40px;height:100vh;min-height:400px}
  .area{position:relative;min-height:0;overflow:hidden;
    background:linear-gradient(150deg,transparent 75%,rgba(0,20,90,.3)),linear-gradient(93deg,#00a0f4 0%,#00b0fb 26%,#0096ee 46%,#0066dc 68%,#0450d4 84%,#0444c4 100%)}
  .icons{display:flex;gap:26px;padding:9px 17px}
  explorer-window{position:absolute;left:313px;right:183px;top:37px;bottom:52px}
  start-menu{position:absolute;left:0;top:40px;bottom:0;width:320px;box-shadow:2px 0 10px rgba(0,0,0,.35)}
  water-mark{position:absolute;right:50px;bottom:6px}`, `
  <div class="area">
    <div class="icons"><ui-icon name="bin" size="46"></ui-icon><ui-icon name="edge" size="48"></ui-icon><ui-icon name="photo" size="48"></ui-icon></div>
    <explorer-window></explorer-window>
    <start-menu></start-menu>
    <water-mark></water-mark>
  </div>
  <task-bar></task-bar>`);
</script>
</body>
</html>
